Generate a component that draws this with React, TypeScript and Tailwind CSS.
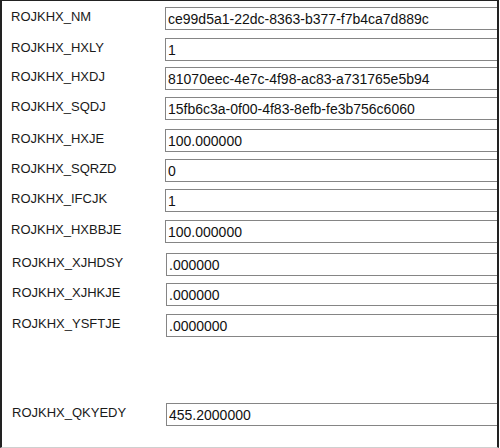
import React from 'react';

interface Field {
  name: string;
  value: string;
  top: string;
  shift?: boolean;
}

// mt values are the gaps between rows, taken from the screenshot
const fields: Field[] = [
  { name: 'ROJKHX_NM', value: 'ce99d5a1-22dc-8363-b377-f7b4ca7d889c', top: 'mt-[6px]' },
  { name: 'ROJKHX_HXLY', value: '1', top: 'mt-[8px]' },
  { name: 'ROJKHX_HXDJ', value: '81070eec-4e7c-4f98-ac83-a731765e5b94', top: 'mt-[6px]' },
  { name: 'ROJKHX_SQDJ', value: '15fb6c3a-0f00-4f83-8efb-fe3b756c6060', top: 'mt-[7px]' },
  { name: 'ROJKHX_HXJE', value: '100.000000', top: 'mt-[9px]' },
  { name: 'ROJKHX_SQRZD', value: '0', top: 'mt-[7px]' },
  { name: 'ROJKHX_IFCJK', value: '1', top: 'mt-[7px]' },
  { name: 'ROJKHX_HXBBJE', value: '100.000000', top: 'mt-[8px]' },
  { name: 'ROJKHX_XJHDSY', value: '.000000', top: 'mt-[10px]', shift: true },
  { name: 'ROJKHX_XJHKJE', value: '.000000', top: 'mt-[7px]', shift: true },
  { name: 'ROJKHX_YSFTJE', value: '.0000000', top: 'mt-[8px]', shift: true },
  { name: 'ROJKHX_QKYEDY', value: '455.2000000', top: 'mt-[66px]', shift: true },
];

const FieldRow: React.FC<{ field: Field }> = ({ field }) => (
  <div className={`flex items-center h-[23px] ${field.top} ${field.shift ? 'pl-px' : ''}`}>
    <span className="w-[163px] shrink-0 pl-[9px] mb-[3px] text-[13px] text-[#1a1a1a] whitespace-nowrap">
      {field.name}
    </span>
    <input
      readOnly
      defaultValue={field.value}
      className="h-[23px] w-[345px] shrink-0 border border-[#858585] bg-white pl-[2px] text-[14px] text-[#111] outline-none"
      style={{ fontFamily: '"Liberation Sans", Arial, sans-serif' }}
    />
  </div>
);

export default function App() {
  return (
    <div
      className="w-[499px] h-[448px] bg-white border-l-2 border-t border-r-2 border-b border-[#222] border-b-[#cfcfcf] overflow-hidden flex flex-col"
      style={{ fontFamily: '"Liberation Sans", Arial, sans-serif' }}
    >
      {fields.map((f) => (
        <FieldRow key={f.name} field={f} />
      ))}
    </div>
  );
}
